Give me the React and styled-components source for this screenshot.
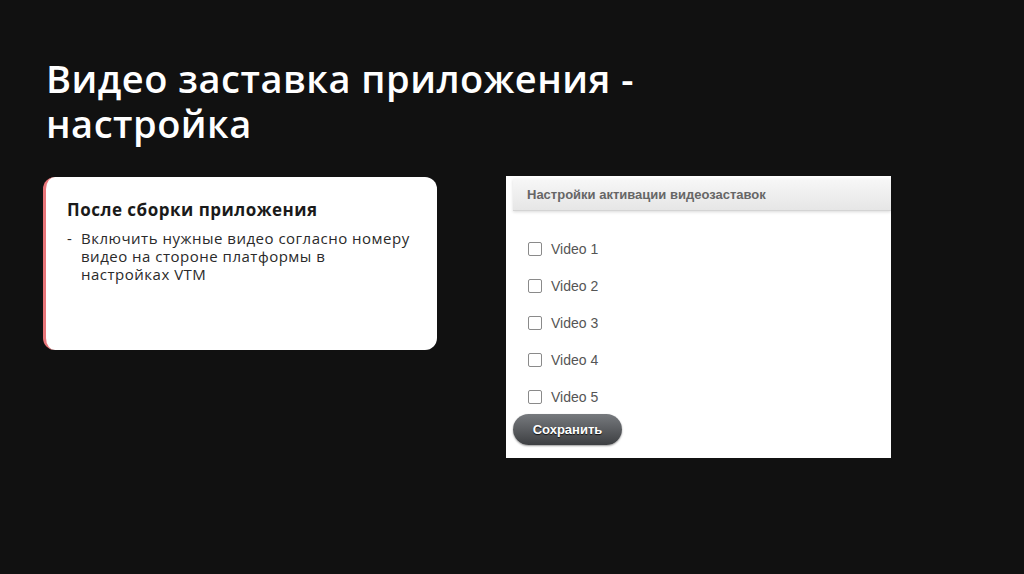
import styled, { createGlobalStyle } from "styled-components";

const GlobalStyle = createGlobalStyle`
  html, body {
    margin: 0;
    padding: 0;
    background: #111111;
  }
`;

const VIDEOS = ["Video 1", "Video 2", "Video 3", "Video 4", "Video 5"];

const App = () => {
  return (
    <Page>
      <GlobalStyle />
      <Title>
        Видео заставка приложения -
        <br />
        настройка
      </Title>
      <Content>
        <InfoCard>
          <CardTitle>После сборки приложения</CardTitle>
          <BulletRow>
            <Dash>-</Dash>
            <BulletText>
              Включить нужные видео согласно номеру видео на стороне платформы в
              настройках VTM
            </BulletText>
          </BulletRow>
        </InfoCard>
        <Shot>
          <ShotHeader>Настройки активации видеозаставок</ShotHeader>
          <CheckList>
            {VIDEOS.map((v) => (
              <CheckRow key={v}>
                <Box />
                <CheckLabel>{v}</CheckLabel>
              </CheckRow>
            ))}
          </CheckList>
          <SaveButton>Сохранить</SaveButton>
        </Shot>
      </Content>
    </Page>
  );
};

const Page = styled.div`
  width: 1024px;
  height: 574px;
  box-sizing: border-box;
  padding: 56px 0 0 46px;
  background: #111111;
  overflow: hidden;
`;

const Title = styled.h1`
  margin: 0;
  color: #ffffff;
  font-family: "Open Sans", sans-serif;
  font-weight: 600;
  font-size: 38px;
  line-height: 45px;
  letter-spacing: 0.5px;
`;

const Content = styled.div`
  display: flex;
  align-items: flex-start;
  margin-top: 30px;
  margin-left: -3px;
`;

const InfoCard = styled.div`
  width: 394px;
  height: 173px;
  box-sizing: border-box;
  background: #ffffff;
  border-radius: 12px;
  border-left: 3px solid #e9767a;
  padding: 21px 20px 0 21px;
  margin-top: 1px;
`;

const CardTitle = styled.div`
  font-family: "Open Sans", sans-serif;
  font-weight: 700;
  font-size: 17px;
  line-height: 24px;
  letter-spacing: 0.5px;
  color: #1a1a1a;
`;

const BulletRow = styled.div`
  display: flex;
  gap: 6px;
  margin-top: 7px;
  font-family: "Open Sans", sans-serif;
  font-size: 15px;
  line-height: 18px;
  letter-spacing: 0.5px;
  color: #2a2a2a;
`;

const Dash = styled.span`
  width: 8px;
`;

const BulletText = styled.div`
  width: 334px;
`;

const Shot = styled.div`
  width: 385px;
  height: 282px;
  box-sizing: border-box;
  margin-left: 69px;
  background: #ffffff;
  padding: 3px 0 0 7px;
  display: flex;
  flex-direction: column;
`;

const ShotHeader = styled.div`
  height: 32px;
  box-sizing: border-box;
  padding: 8px 0 0 14px;
  background: linear-gradient(#f7f7f7, #e6e6e6);
  border-bottom: 1px solid #d4d4d4;
  box-shadow: 0 1px 3px rgba(0, 0, 0, 0.15);
  font-family: "Liberation Sans", Arial, sans-serif;
  font-weight: 700;
  font-size: 13px;
  color: #666666;
`;

const CheckList = styled.div`
  display: flex;
  flex-direction: column;
  gap: 17px;
  padding: 28px 0 0 15px;
`;

const CheckRow = styled.div`
  display: flex;
  align-items: center;
  gap: 9px;
  height: 20px;
`;

const Box = styled.span`
  width: 12px;
  height: 12px;
  border: 1px solid #8a8a8a;
  border-radius: 2px;
  background: #ffffff;
`;

const CheckLabel = styled.span`
  font-family: "Liberation Sans", Arial, sans-serif;
  font-size: 14px;
  color: #555555;
`;

const SaveButton = styled.div`
  width: 109px;
  height: 31px;
  margin-top: 7px;
  border-radius: 16px;
  background: linear-gradient(#777a7e, #3d3f42);
  box-shadow: 0 1px 2px rgba(0, 0, 0, 0.4);
  display: flex;
  align-items: center;
  justify-content: center;
  font-family: "Liberation Sans", Arial, sans-serif;
  font-weight: 700;
  font-size: 13px;
  color: #ffffff;
  text-shadow: 0 1px 1px rgba(0, 0, 0, 0.8);
`;

export default App;
